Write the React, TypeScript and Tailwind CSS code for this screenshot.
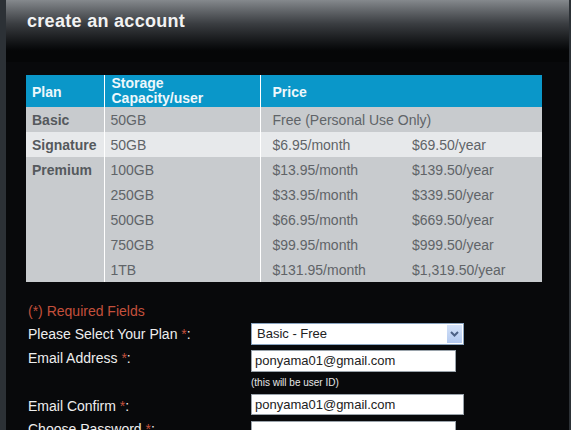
const ROWS = [
  { plan: "Basic", storage: "50GB", month: "Free (Personal Use Only)", year: "", hi: false },
  { plan: "Signature", storage: "50GB", month: "$6.95/month", year: "$69.50/year", hi: true },
  { plan: "Premium", storage: "100GB", month: "$13.95/month", year: "$139.50/year", hi: false },
  { plan: "", storage: "250GB", month: "$33.95/month", year: "$339.50/year", hi: false },
  { plan: "", storage: "500GB", month: "$66.95/month", year: "$669.50/year", hi: false },
  { plan: "", storage: "750GB", month: "$99.95/month", year: "$999.50/year", hi: false },
  { plan: "", storage: "1TB", month: "$131.95/month", year: "$1,319.50/year", hi: false },
];

function Req() {
  return <span className="text-[#c4503c]">*</span>;
}

export default function App() {
  return (
    <div className="flex h-[430px] w-[571px] overflow-hidden bg-[#2c3136] font-['Liberation_Sans',Arial,sans-serif]">
      <div className="ml-[6px] h-full w-[563px] bg-[#08090b]">
        {/* header */}
        <div className="h-[62px] bg-gradient-to-b from-[#85898d] via-[#3b3e42] via-[38%] to-[#050607] to-[82%] pl-[21px] pt-[10px]">
          <h1 className="text-[18px] font-bold leading-[22px] tracking-[0.3px] text-[#f2f2f2]">
            create an account
          </h1>
        </div>

        {/* plans table */}
        <table className="ml-[20px] mt-[13px] w-[516px] table-fixed border-collapse text-[14px]">
          <colgroup>
            <col className="w-[78px]" />
            <col className="w-[156px]" />
            <col className="w-[140px]" />
            <col className="w-[142px]" />
          </colgroup>
          <thead>
            <tr className="h-[32px] bg-[#0a97c9] text-left font-bold leading-[15px] text-[#eef7fb]">
              <th className="border-r border-white pl-[6px] pt-[2px] align-middle">Plan</th>
              <th className="border-r border-white pl-[7px] align-middle">
                Storage
                <br />
                Capacity/user
              </th>
              <th colSpan={2} className="pl-[12px] pt-[2px] align-middle">
                Price
              </th>
            </tr>
          </thead>
          <tbody>
            {ROWS.map((r, i) => (
              <tr
                key={i}
                className={
                  "h-[25px] leading-[16px] text-[#606468] " +
                  (r.hi ? "bg-[#e7e9eb]" : "bg-[#c8cbce]")
                }
              >
                <td className="border-r border-white pl-[6px] font-bold text-[#55595d]">{r.plan}</td>
                <td className="border-r border-white pl-[6px]">{r.storage}</td>
                {r.year ? (
                  <>
                    <td className="pl-[12px]">{r.month}</td>
                    <td className="pl-[12px]">{r.year}</td>
                  </>
                ) : (
                  <td colSpan={2} className="pl-[12px]">
                    {r.month}
                  </td>
                )}
              </tr>
            ))}
          </tbody>
        </table>

        {/* form */}
        <div className="ml-[22px] mt-[21px] flex flex-col text-[14px] text-[#eeeeee]">
          <div className="leading-[16px] text-[#c4503c]">(*) Required Fields</div>

          <div className="mt-[4px] flex items-center">
            <div className="w-[223px] leading-[22px]">
              Please Select Your Plan <Req />:
            </div>
            <div className="flex h-[22px] w-[213px] items-center border border-[#8aa4c0] bg-white">
              <span className="flex-1 pl-[5px] text-[13px] text-[#222]">Basic - Free</span>
              <span className="mr-[1px] flex h-[18px] w-[15px] items-center justify-center bg-gradient-to-b from-[#d4e2f8] to-[#b3c9ef]">
                <svg width="9" height="6" viewBox="0 0 9 6">
                  <path d="M1 1 L4.5 4.5 L8 1" stroke="#4d6185" strokeWidth="2" fill="none" />
                </svg>
              </span>
            </div>
          </div>

          <div className="mt-[5px] flex items-start">
            <div className="w-[223px] leading-[16px]">
              Email Address <Req />:
            </div>
            <div className="flex h-[22px] w-[205px] items-center border border-[#9aa3ab] bg-white pl-[3px] text-[13px] text-[#222]">
              ponyama01@gmail.com
            </div>
          </div>

          <div className="ml-[223px] mt-[5px] text-[10px] leading-[12px] text-[#e6e6e6]">
            (this will be user ID)
          </div>

          <div className="mt-[5px] flex items-start">
            <div className="w-[223px] pt-[4px] leading-[16px]">
              Email Confirm <Req />:
            </div>
            <div className="flex h-[21px] w-[213px] items-center border border-[#9aa3ab] bg-white pl-[3px] text-[13px] text-[#222]">
              ponyama01@gmail.com
            </div>
          </div>

          <div className="mt-[6px] flex items-start">
            <div className="w-[223px] leading-[16px]">
              Choose Password <Req />:
            </div>
            <div className="h-[21px] w-[205px] border border-[#9aa3ab] bg-white" />
          </div>
        </div>
      </div>
    </div>
  );
}
